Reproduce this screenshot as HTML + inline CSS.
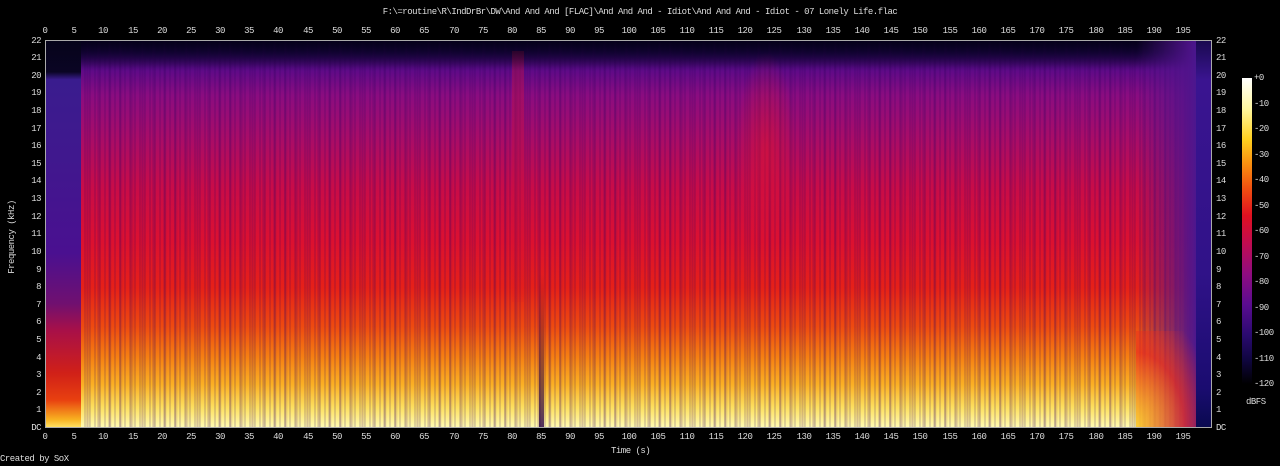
<!DOCTYPE html>
<html><head><meta charset="utf-8"><style>
body{margin:0;background:#000;width:1280px;height:466px;overflow:hidden;position:relative;font-family:"Liberation Mono","DejaVu Sans Mono",monospace;font-size:9px;letter-spacing:-0.5px;color:#ddd}
.a{position:absolute}
#plot{position:absolute;left:45px;top:40px;width:1167px;height:388px;overflow:hidden;border:1px solid #aaa;box-sizing:border-box;
background:linear-gradient(to bottom,#0a0428 0%,#200650 3%,#5a0a88 7%,#8a0c80 14%,#a80c68 25%,#c80c48 38%,#dc1030 52%,#e62018 64%,#ee4a10 74%,#f68012 82%,#fbb024 89%,#fde060 95%,#fffab0 100%)}
.l{position:absolute;transform:translateX(-50%);white-space:nowrap}
.r{position:absolute;transform:translateY(-50%);white-space:nowrap}
</style></head><body>
<div class="a" style="left:0;right:0;top:7px;text-align:center">F:\=routine\R\IndDrBr\DW\And And And [FLAC]\And And And - Idiot\And And And - Idiot - 07 Lonely Life.flac</div>
<div id="plot">
 <div class="a" style="left:0;top:0;width:100%;height:100%;background:repeating-linear-gradient(90deg,rgba(40,0,80,0) 0,rgba(40,0,80,0) 3px,rgba(40,0,90,.3) 4px,rgba(40,0,80,0) 5px),repeating-linear-gradient(90deg,rgba(0,0,0,0) 0,rgba(0,0,0,0) 7px,rgba(60,0,100,.25) 8px,rgba(0,0,0,0) 11px);"></div>
 <div class="a" style="left:466px;top:10px;width:12px;height:65%;background:linear-gradient(to bottom,rgba(200,16,60,.4),rgba(210,16,40,.1));"></div>
 <div class="a" style="left:0;top:0;width:100%;height:30px;background:linear-gradient(to bottom,rgba(5,0,25,.9),rgba(5,0,25,0))"></div>
 <div class="a" style="left:0;top:0;width:35px;height:100%;background:linear-gradient(to bottom,#06041a 0%,#0a0524 8%,#3a1c8e 10%,#40188e 30%,#4a1090 55%,#701070 68%,#a81048 75%,#d02018 86%,#e84010 93%,#f8b020 98%,#ffe060 100%)"></div>
 <div class="a" style="left:493px;top:60%;width:5px;height:40%;background:linear-gradient(to bottom,rgba(60,0,90,0),rgba(40,0,70,.8))"></div>
 <div class="a" style="left:690px;top:10px;width:60px;height:200px;background:radial-gradient(ellipse at center,rgba(230,20,40,.5),rgba(230,20,40,0) 70%)"></div>
 <div class="a" style="left:1090px;top:0;width:62px;height:100%;background:linear-gradient(to right,rgba(80,20,140,0),rgba(80,20,140,.9) 85%,#4a1890)"></div>
 <div class="a" style="left:1090px;top:75%;width:62px;height:25%;background:radial-gradient(ellipse at 0% 100%,rgba(250,200,40,.9),rgba(235,40,30,.7) 55%,rgba(200,20,80,0) 90%)"></div>
 <div class="a" style="left:1150px;top:0;width:17px;height:100%;background:linear-gradient(to bottom,#1a0a50 0%,#3a1490 10%,#301288 60%,#1a0c70 90%,#0a0a50 100%)"></div>
</div>
<div class="a" style="left:1242px;top:78px;width:10px;height:306px;background:linear-gradient(to bottom,#fff 0%,#fff8a0 10%,#ffd020 20%,#fa9010 28%,#f05010 36%,#e01020 45%,#c00c50 54%,#900c80 64%,#5a0c90 74%,#2a0a70 84%,#100640 92%,#000 100%)"></div>
<div class="r" style="left:1254px;top:78px">+0</div><div class="r" style="left:1254px;top:104px">-10</div><div class="r" style="left:1254px;top:129px">-20</div><div class="r" style="left:1254px;top:155px">-30</div><div class="r" style="left:1254px;top:180px">-40</div><div class="r" style="left:1254px;top:206px">-50</div><div class="r" style="left:1254px;top:231px">-60</div><div class="r" style="left:1254px;top:257px">-70</div><div class="r" style="left:1254px;top:282px">-80</div><div class="r" style="left:1254px;top:308px">-90</div><div class="r" style="left:1254px;top:333px">-100</div><div class="r" style="left:1254px;top:359px">-110</div><div class="r" style="left:1254px;top:384px">-120</div>
<div class="a" style="left:1246px;top:397px">dBFS</div>
<div class="a" style="left:0;top:454px">Created by SoX</div>
<div class="a" style="left:611px;top:446px">Time (s)</div>
<div class="a" style="left:12px;top:237px;transform:translate(-50%,-50%) rotate(-90deg);white-space:nowrap">Frequency (kHz)</div>
<div style="position:absolute;left:0;top:26px;width:1280px">
<span class="l" style="left:45px">0</span><span class="l" style="left:74px">5</span><span class="l" style="left:103px">10</span><span class="l" style="left:133px">15</span><span class="l" style="left:162px">20</span><span class="l" style="left:191px">25</span><span class="l" style="left:220px">30</span><span class="l" style="left:249px">35</span><span class="l" style="left:278px">40</span><span class="l" style="left:308px">45</span><span class="l" style="left:337px">50</span><span class="l" style="left:366px">55</span><span class="l" style="left:395px">60</span><span class="l" style="left:424px">65</span><span class="l" style="left:454px">70</span><span class="l" style="left:483px">75</span><span class="l" style="left:512px">80</span><span class="l" style="left:541px">85</span><span class="l" style="left:570px">90</span><span class="l" style="left:599px">95</span><span class="l" style="left:629px">100</span><span class="l" style="left:658px">105</span><span class="l" style="left:687px">110</span><span class="l" style="left:716px">115</span><span class="l" style="left:745px">120</span><span class="l" style="left:774px">125</span><span class="l" style="left:804px">130</span><span class="l" style="left:833px">135</span><span class="l" style="left:862px">140</span><span class="l" style="left:891px">145</span><span class="l" style="left:920px">150</span><span class="l" style="left:950px">155</span><span class="l" style="left:979px">160</span><span class="l" style="left:1008px">165</span><span class="l" style="left:1037px">170</span><span class="l" style="left:1066px">175</span><span class="l" style="left:1096px">180</span><span class="l" style="left:1125px">185</span><span class="l" style="left:1154px">190</span><span class="l" style="left:1183px">195</span>
</div>
<div style="position:absolute;left:0;top:432px;width:1280px">
<span class="l" style="left:45px">0</span><span class="l" style="left:74px">5</span><span class="l" style="left:103px">10</span><span class="l" style="left:133px">15</span><span class="l" style="left:162px">20</span><span class="l" style="left:191px">25</span><span class="l" style="left:220px">30</span><span class="l" style="left:249px">35</span><span class="l" style="left:278px">40</span><span class="l" style="left:308px">45</span><span class="l" style="left:337px">50</span><span class="l" style="left:366px">55</span><span class="l" style="left:395px">60</span><span class="l" style="left:424px">65</span><span class="l" style="left:454px">70</span><span class="l" style="left:483px">75</span><span class="l" style="left:512px">80</span><span class="l" style="left:541px">85</span><span class="l" style="left:570px">90</span><span class="l" style="left:599px">95</span><span class="l" style="left:629px">100</span><span class="l" style="left:658px">105</span><span class="l" style="left:687px">110</span><span class="l" style="left:716px">115</span><span class="l" style="left:745px">120</span><span class="l" style="left:774px">125</span><span class="l" style="left:804px">130</span><span class="l" style="left:833px">135</span><span class="l" style="left:862px">140</span><span class="l" style="left:891px">145</span><span class="l" style="left:920px">150</span><span class="l" style="left:950px">155</span><span class="l" style="left:979px">160</span><span class="l" style="left:1008px">165</span><span class="l" style="left:1037px">170</span><span class="l" style="left:1066px">175</span><span class="l" style="left:1096px">180</span><span class="l" style="left:1125px">185</span><span class="l" style="left:1154px">190</span><span class="l" style="left:1183px">195</span>
</div>
<div style="position:absolute;left:0;top:0;width:44px">
<span class="r" style="right:3px;top:41px">22</span><span class="r" style="right:3px;top:58px">21</span><span class="r" style="right:3px;top:76px">20</span><span class="r" style="right:3px;top:93px">19</span><span class="r" style="right:3px;top:111px">18</span><span class="r" style="right:3px;top:129px">17</span><span class="r" style="right:3px;top:146px">16</span><span class="r" style="right:3px;top:164px">15</span><span class="r" style="right:3px;top:181px">14</span><span class="r" style="right:3px;top:199px">13</span><span class="r" style="right:3px;top:217px">12</span><span class="r" style="right:3px;top:234px">11</span><span class="r" style="right:3px;top:252px">10</span><span class="r" style="right:3px;top:270px">9</span><span class="r" style="right:3px;top:287px">8</span><span class="r" style="right:3px;top:305px">7</span><span class="r" style="right:3px;top:322px">6</span><span class="r" style="right:3px;top:340px">5</span><span class="r" style="right:3px;top:358px">4</span><span class="r" style="right:3px;top:375px">3</span><span class="r" style="right:3px;top:393px">2</span><span class="r" style="right:3px;top:410px">1</span><span class="r" style="right:3px;top:428px">DC</span>
</div>
<div style="position:absolute;left:1216px;top:0">
<span class="r" style="left:0;top:41px">22</span><span class="r" style="left:0;top:58px">21</span><span class="r" style="left:0;top:76px">20</span><span class="r" style="left:0;top:93px">19</span><span class="r" style="left:0;top:111px">18</span><span class="r" style="left:0;top:129px">17</span><span class="r" style="left:0;top:146px">16</span><span class="r" style="left:0;top:164px">15</span><span class="r" style="left:0;top:181px">14</span><span class="r" style="left:0;top:199px">13</span><span class="r" style="left:0;top:217px">12</span><span class="r" style="left:0;top:234px">11</span><span class="r" style="left:0;top:252px">10</span><span class="r" style="left:0;top:270px">9</span><span class="r" style="left:0;top:287px">8</span><span class="r" style="left:0;top:305px">7</span><span class="r" style="left:0;top:322px">6</span><span class="r" style="left:0;top:340px">5</span><span class="r" style="left:0;top:358px">4</span><span class="r" style="left:0;top:375px">3</span><span class="r" style="left:0;top:393px">2</span><span class="r" style="left:0;top:410px">1</span><span class="r" style="left:0;top:428px">DC</span>
</div>
</body></html>
